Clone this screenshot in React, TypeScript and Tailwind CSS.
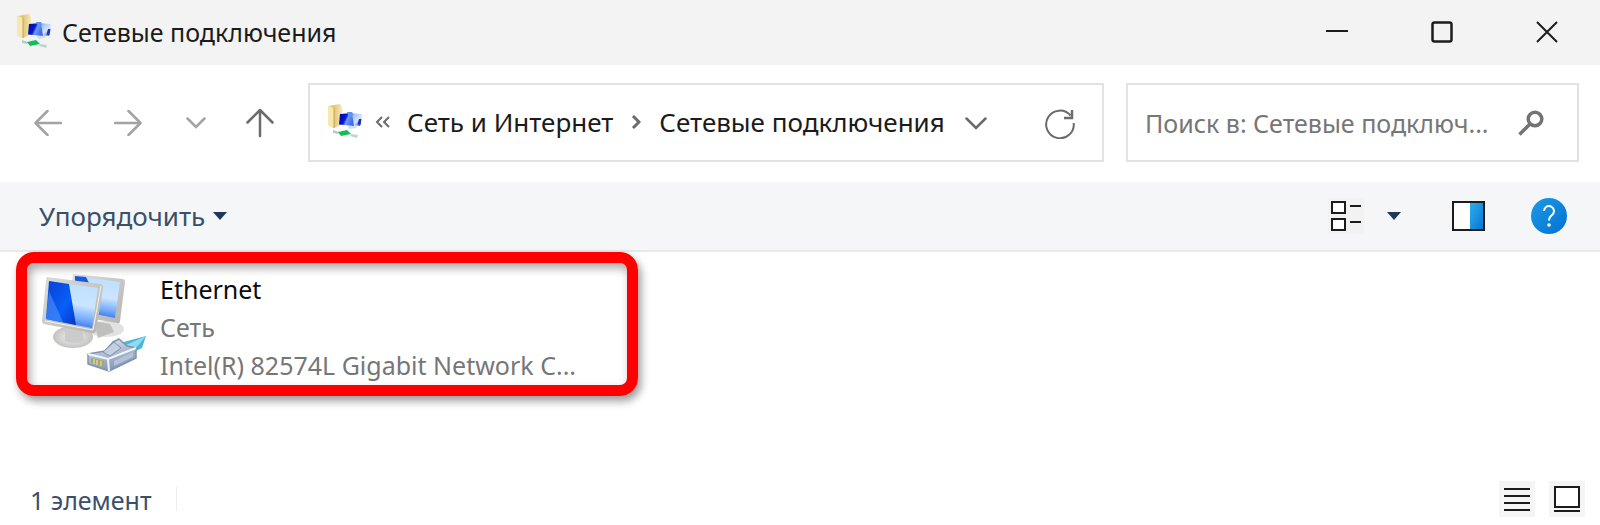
import { useState, type ReactNode } from 'react';

function FolderNetworkIcon() {
  return (
    <svg width="36" height="38" viewBox="0 0 36 38" aria-hidden="true" className="shrink-0">
      <defs>
        <linearGradient id="folder" x1="0" y1="0" x2="1" y2="0">
          <stop offset="0" stopColor="#f6e3a2" />
          <stop offset="0.35" stopColor="#dcc070" />
          <stop offset="1" stopColor="#f7e9b4" />
        </linearGradient>
        <linearGradient id="screen-front" x1="0" y1="0" x2="1" y2="0.4">
          <stop offset="0" stopColor="#0208a0" />
          <stop offset="0.5" stopColor="#0a18cc" />
          <stop offset="0.65" stopColor="#6f9cf6" />
          <stop offset="1" stopColor="#3c6cf0" />
        </linearGradient>
        <linearGradient id="screen-back" x1="0" y1="0" x2="1" y2="1">
          <stop offset="0" stopColor="#7fa4f6" />
          <stop offset="0.6" stopColor="#d3e6ff" />
          <stop offset="1" stopColor="#2040cc" />
        </linearGradient>
      </defs>
      <path d="M1 3 13 1l2 4v16L7 25 1 22Z" fill="url(#folder)" />
      <path d="M1 3 7 5v20l-6-3Z" fill="#f8e8ae" />
      <path d="M7 5v20" stroke="#c6a654" strokeWidth="1" />
      <path d="m22 10 13 1-2 12-11-1Z" fill="url(#screen-back)" />
      <path d="M32 16h2.500l-1 6-3-.5Z" fill="#1a30c4" />
      <path d="m13 11 12-1 2 13-15-1.500Z" fill="url(#screen-front)" />
      <path d="m20 9 5 0 1.500 3-5 .5Z" fill="#5f92f4" />
      <path d="M21 23l8 0 1 2-8 1Z" fill="#d5dde6" />
      <path d="m6 27 6 2-1 2-5-1Z" fill="#b4cfc1" />
      <path d="m11 29 9-2 4 4-10 2Z" fill="#14bd5c" />
      <path d="m24 31 7 1-1 3-7-2Z" fill="#bdd5d0" />
    </svg>
  );
}

function EthernetIcon() {
  return (
    <svg width="106" height="102" viewBox="0 0 106 102" aria-hidden="true" className="shrink-0">
      <defs>
        <linearGradient id="bezel" x1="0" y1="0" x2="1" y2="1">
          <stop offset="0" stopColor="#dcdcda" />
          <stop offset="1" stopColor="#b4b4b2" />
        </linearGradient>
        <linearGradient id="glass" x1="0.2" y1="0" x2="0" y2="1">
          <stop offset="0" stopColor="#bfe0ff" />
          <stop offset="0.4" stopColor="#cbe5ff" />
          <stop offset="0.7" stopColor="#6fa8fb" />
          <stop offset="1" stopColor="#0c4ce6" />
        </linearGradient>
        <linearGradient id="shade" x1="0" y1="0" x2="1" y2="1">
          <stop offset="0" stopColor="#0a3fd0" />
          <stop offset="0.6" stopColor="#0660fa" />
          <stop offset="1" stopColor="#0733c4" />
        </linearGradient>
        <radialGradient id="stand">
          <stop offset="0" stopColor="#f4f4f3" />
          <stop offset="1" stopColor="#c2c2c0" />
        </radialGradient>
        <linearGradient id="plug" x1="0" y1="0" x2="0.4" y2="1">
          <stop offset="0" stopColor="#e2eaf6" />
          <stop offset="1" stopColor="#8496b4" />
        </linearGradient>
      </defs>
      <ellipse cx="64" cy="56" rx="18" ry="8" fill="#e2e2e1" />
      <path d="m52 48 16 3 4 8-16 6Z" fill="#bfbfbd" />
      <path d="m31 1 50 5q2 .5 2 3l-5 39q0 3-3 2L52 46 30 10Z" fill="url(#bezel)" />
      <path d="m33 3 45 6-5 36-20-4L33 10Z" fill="url(#glass)" />
      <path d="m33 3 11 1 4 8-15-3Z" fill="#1759e6" />
      <ellipse cx="31" cy="64" rx="20" ry="11" fill="url(#stand)" />
      <path d="m23 52 17 4 2 12q-9 4-19 0Z" fill="#cbcbc9" />
      <path d="M5 4 59 11q3 1 2 4l-7 43q-1 3-4 2L2 51q-2-1-2-3L4 7q0-2 1-3Z" fill="url(#bezel)" />
      <path d="m7 8 49 7-6 40L4 46Z" fill="url(#glass)" />
      <path d="m7 8 20 3 7 41L4 46Z" fill="url(#shade)" />
      <path d="m7 18 14 31L4 46Z" fill="#5f9bfa" opacity=".5" />
      <path d="m3 48 48 9 8-44" fill="none" stroke="#f2f2f0" strokeWidth="1" />
      <path d="m78 70 26-7-4 12-18 9Z" fill="#4db5da" />
      <path d="m84 72 20-9-11 13Z" fill="#8fdcf0" />
      <path d="m63 78 8-9 6-3 8 7 9 2v10L67 98 46 91V81Z" fill="url(#plug)" stroke="#8292ae" strokeWidth="1.500" strokeLinejoin="round" />
      <path d="m46 81 20 5 28-11M66 86l1 12" fill="none" stroke="#f1f5fc" strokeWidth="2" />
      <path d="m61 79 11-10 7 6-11 8Z" fill="#c3cfe3" stroke="#8292ae" />
      <path d="m49 85 13 3v6l-13-4Z" fill="#a8a75a" />
      <path d="M52 86v5m3-4v5m4-4v5" stroke="#eff0c0" strokeWidth="1" />
      <path d="m72 88 19-9v5l-19 9Z" fill="#b4c1d9" />
    </svg>
  );
}

function CaptionButton({ label, children }: { label: string; children: ReactNode }) {
  return (
    <button aria-label={label} className="flex h-full w-[105px] items-center justify-center hover:bg-gray-200">
      <svg width="22" height="22" viewBox="0 0 22 22" fill="none" stroke="#1c1c1c" strokeWidth="2" aria-hidden="true">
        {children}
      </svg>
    </button>
  );
}

function TitleBar() {
  return (
    <header className="flex h-[65px] items-center bg-[#f3f3f3] pr-px pb-[2px] pl-4">
      <FolderNetworkIcon />
      <h1 className="ml-[10px] flex-1 text-[25px] leading-[38px] text-[#1b1b1b]">Сетевые подключения</h1>
      <CaptionButton label="Свернуть">
        <path d="M0 10h22" />
      </CaptionButton>
      <CaptionButton label="Развернуть">
        <rect x="1.500" y="1.500" width="19" height="19" rx="2" strokeWidth="2.500" />
      </CaptionButton>
      <CaptionButton label="Закрыть">
        <path d="m1 1 20 20M21 1 1 21" />
      </CaptionButton>
    </header>
  );
}

function NavigationBar() {
  const [query, setQuery] = useState('');

  return (
    <nav className="flex items-center pt-[18px] pr-[21px] pb-5 pl-2">
      <button aria-label="Назад" className="flex h-12 w-20 items-center justify-center">
        <svg width="28" height="26" viewBox="0 0 28 26" fill="none" stroke="#a3a3a3" strokeWidth="2.500" strokeLinecap="round" strokeLinejoin="round">
          <path d="M27 13H2M13.500 1 1.500 13l12 12" />
        </svg>
      </button>
      <button aria-label="Вперёд" className="flex h-12 w-20 items-center justify-center">
        <svg width="28" height="26" viewBox="0 0 28 26" fill="none" stroke="#a3a3a3" strokeWidth="2.500" strokeLinecap="round" strokeLinejoin="round">
          <path d="M1 13h25M14.500 1l12 12-12 12" />
        </svg>
      </button>
      <button aria-label="Последние расположения" className="flex h-12 w-14 items-center justify-center">
        <svg width="20" height="12" viewBox="0 0 20 12" fill="none" stroke="#a3a3a3" strokeWidth="2.500" strokeLinecap="round">
          <path d="m1.500 1.500 8.500 8.500 8.500-8.500" />
        </svg>
      </button>
      <button aria-label="Вверх" className="flex h-12 w-18 items-center justify-center">
        <svg width="28" height="30" viewBox="0 0 28 30" fill="none" stroke="#6b6b6b" strokeWidth="2.500" strokeLinecap="round" strokeLinejoin="round">
          <path d="M14 28V2M1.500 14.500 14 2l12.500 12.500" />
        </svg>
      </button>

      <div className="ml-3 flex h-[79px] min-w-0 flex-1 items-center border-2 border-[#e2e2e2] pb-[2px] pl-[17px] text-[26px] leading-[38px] text-[#1b1b1b]">
        <FolderNetworkIcon />
        <svg width="16" height="12" viewBox="0 0 16 12" fill="none" stroke="#6b6b6b" strokeWidth="2" className="mr-4 ml-3 shrink-0" aria-hidden="true">
          <path d="M7 1 2 6l5 5M14 1 9 6l5 5" />
        </svg>
        <a href="#network" className="whitespace-nowrap">Сеть и Интернет</a>
        <svg width="10" height="14" viewBox="0 0 10 14" fill="none" stroke="#6b6b6b" strokeWidth="3" className="mx-[18px] shrink-0" aria-hidden="true">
          <path d="m2 1 6 6-6 6" />
        </svg>
        <a href="#connections" className="whitespace-nowrap">Сетевые подключения</a>
        <button aria-label="Предыдущие расположения" className="ml-auto flex h-12 w-12 items-center justify-center pt-1">
          <svg width="22" height="13" viewBox="0 0 22 13" fill="none" stroke="#6b6b6b" strokeWidth="2.500" strokeLinecap="round">
            <path d="m1.500 1.500 9.500 9.500 9.500-9.500" />
          </svg>
        </button>
        <button aria-label="Обновить" className="mr-[18px] ml-[36px] flex h-12 w-12 items-center justify-center pt-1">
          <svg width="30" height="30" viewBox="0 0 30 30" fill="none" stroke="#6b6b6b" strokeWidth="2">
            <path d="M28.700 14A13.800 13.800 0 1 1 25.500 6.500" />
            <path d="M27 1v8h-8" strokeWidth="2.500" />
          </svg>
        </button>
      </div>

      <div className="ml-[22px] flex h-[79px] w-[453px] items-center border-2 border-[#e2e2e2]">
        <label htmlFor="search" className="sr-only">
          Поиск
        </label>
        <input
          id="search"
          value={query}
          onChange={(e) => setQuery(e.target.value)}
          placeholder="Поиск в: Сетевые подключ..."
          className="h-full min-w-0 flex-1 pl-[17px] text-[25px] text-[#1b1b1b] placeholder:text-[#767676] focus:outline-none"
        />
        <button aria-label="Найти" className="mr-[22px] flex size-12 items-center justify-center">
          <svg width="26" height="26" viewBox="0 0 26 26" fill="none" stroke="#737373" strokeWidth="3.500">
            <circle cx="17" cy="9" r="6.800" />
            <path d="M12 14 1.500 24.500" />
          </svg>
        </button>
      </div>
    </nav>
  );
}

function Caret() {
  return (
    <svg width="14" height="8" viewBox="0 0 14 8" fill="#1e395b" aria-hidden="true">
      <path d="M0 0h14L7 8Z" />
    </svg>
  );
}

function CommandBar() {
  return (
    <div className="flex h-[70px] items-center border-b-2 border-[#e9e9ea] bg-[#f4f6f8] pr-[33px] pl-[39px]">
      <button className="mr-auto flex items-center gap-2 text-[26px] leading-[38px] text-[#3b5068]">
        Упорядочить
        <Caret />
      </button>
      <button aria-label="Изменить представление" className="flex size-9 items-center justify-center bg-[#f2f2f2]">
        <svg width="30" height="30" viewBox="0 0 30 30" fill="#fff" stroke="#1c1c1c" strokeWidth="2">
          <rect x="1" y="1" width="13" height="11" />
          <rect x="1" y="18" width="13" height="11" />
          <path d="M19 5h11M19 21h11" />
        </svg>
      </button>
      <button aria-label="Дополнительные параметры" className="ml-3 flex size-9 items-center justify-center">
        <Caret />
      </button>
      <button aria-label="Область просмотра" className="ml-[38px] flex size-9 items-center justify-center">
        <svg width="33" height="30" viewBox="0 0 33 30">
          <defs>
            <linearGradient id="pane" x1="0" y1="0" x2="1" y2="1">
              <stop offset="0" stopColor="#2cb0ec" />
              <stop offset="1" stopColor="#0573d3" />
            </linearGradient>
          </defs>
          <rect x="1" y="1" width="31" height="28" fill="#fff" />
          <path d="M18 1h14v28H18Z" fill="url(#pane)" />
          <rect x="1" y="1" width="31" height="28" fill="none" stroke="#1c1c1c" strokeWidth="2" />
        </svg>
      </button>
      <button
        aria-label="Справка"
        className="ml-[45px] flex size-9 items-center justify-center rounded-full bg-linear-to-br from-[#1c9be4] to-[#0570d4] text-white"
      >
        <svg width="14" height="22" viewBox="0 0 14 22" fill="none" stroke="currentColor" strokeWidth="2">
          <path d="M2 6a5 5 0 1 1 8 4C8 11.500 7 12.500 7 15.500" />
          <circle cx="7" cy="20" r="1.800" fill="currentColor" stroke="none" />
        </svg>
      </button>
    </div>
  );
}

const adapter = {
  name: 'Ethernet',
  network: 'Сеть',
  device: 'Intel(R) 82574L Gigabit Network C...',
};

export default function App() {
  return (
    <div className="flex min-h-screen flex-col bg-white font-['Noto_Sans',sans-serif]">
      <TitleBar />
      <NavigationBar />
      <CommandBar />

      <main className="flex-1 pl-4">
        <button className="flex h-[144px] w-[622px] items-center rounded-[18px] border-[11px] border-[#fe0000] pl-[15px] text-left text-[25px] leading-[38px] text-[#767676] shadow-[3px_5px_8px_rgba(0,0,0,0.4),inset_3px_5px_10px_rgba(0,0,0,0.35)]">
          <EthernetIcon />
          <span className="ml-3 flex flex-col pt-[6px] whitespace-nowrap">
            <span className="text-[#0b0b0b]">{adapter.name}</span>
            <span>{adapter.network}</span>
            <span>{adapter.device}</span>
          </span>
        </button>
      </main>

      <footer className="flex items-center pr-[15px] pb-[6px] pl-[30px]">
        <p className="pt-[2px] text-[25px] leading-[38px] text-[#3b5068]">1 элемент</p>
        <span className="ml-6 h-6 w-px bg-[#ededed]" />
        <button aria-label="Таблица" className="ml-auto flex size-9 items-center justify-center bg-[#f5f5f5]">
          <svg width="26" height="26" viewBox="0 0 26 26" stroke="#1c1c1c" strokeWidth="2">
            <path d="M0 3h26M0 10h26M0 17h26M0 24h26" />
          </svg>
        </button>
        <button aria-label="Крупные значки" className="ml-[14px] flex size-9 items-center justify-center bg-[#f5f5f5]">
          <svg width="26" height="26" viewBox="0 0 26 26" fill="#fff" stroke="#1c1c1c" strokeWidth="2">
            <rect x="1" y="1" width="24" height="20" />
            <path d="M0 25h26" />
          </svg>
        </button>
      </footer>
    </div>
  );
}
